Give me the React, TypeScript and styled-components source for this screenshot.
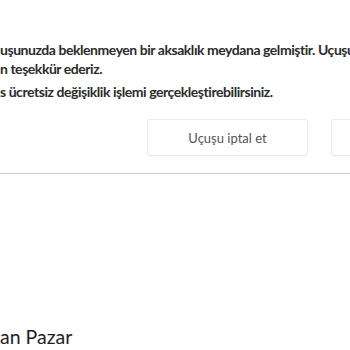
import React from "react";
import styled, { createGlobalStyle } from "styled-components";

const Global = createGlobalStyle`
  html, body { margin: 0; padding: 0; background: #ffffff; overflow: hidden; }
  body { font-family: Lato, "Open Sans", "Liberation Sans", sans-serif; }
`;

const Page = styled.div`
  width: 350px;
  height: 350px;
  overflow: hidden;
  display: flex;
  flex-direction: column;
  background: #fff;
`;

const Notice = styled.section`
  padding-top: 40px;
  display: flex;
  flex-direction: column;
`;

const Para = styled.p<{ $gap?: number }>`
  margin: 0;
  margin-top: ${(p) => p.$gap ?? 0}px;
  font-size: 14px;
  line-height: 19px;
  font-weight: 700;
  letter-spacing: -0.45px;
  color: #2b2b2b;
  white-space: nowrap;
`;

const Actions = styled.div`
  display: flex;
  gap: 23px;
  margin-top: 18px;
  padding-left: 147px;
`;

const Button = styled.button`
  flex: 0 0 161px;
  height: 37px;
  background: #fff;
  border: 1px solid #ececec;
  border-radius: 3px;
  box-shadow: 0 1px 2px rgba(0, 0, 0, 0.04);
  font-family: inherit;
  font-size: 13px;
  color: #555;
  cursor: pointer;
`;

const Divider = styled.hr`
  margin: 17px 0 0;
  border: none;
  border-top: 1px solid #cfcfcf;
  box-shadow: 0 0 6px rgba(0, 0, 0, 0.06);
`;

const Title = styled.h2`
  margin: 150px 0 0;
  font-size: 19.5px;
  font-weight: 400;
  color: #1f1f1f;
  line-height: 26px;
  white-space: nowrap;
`;

export default function App() {
  return (
    <Page>
      <Global />
      <Notice>
        <Para>uşunuzda beklenmeyen bir aksaklık meydana gelmiştir. Uçuşunuz</Para>
        <Para>n teşekkür ederiz.</Para>
        <Para $gap={4}>s ücretsiz değişiklik işlemi gerçekleştirebilirsiniz.</Para>
      </Notice>
      <Actions>
        <Button>Uçuşu iptal et</Button>
        <Button>Uçuşu değiştir</Button>
      </Actions>
      <Divider />
      <Title>an Pazar</Title>
    </Page>
  );
}
